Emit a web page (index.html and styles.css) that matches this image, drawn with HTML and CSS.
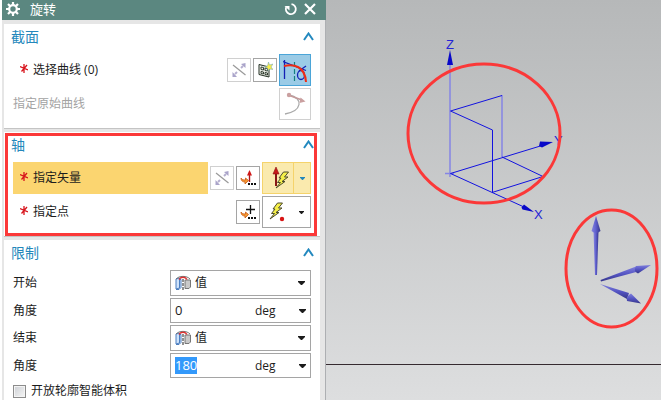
FILE: index.html
```html
<!DOCTYPE html>
<html lang="zh-CN">
<head>
<meta charset="utf-8">
<title>旋转</title>
<link rel="stylesheet" href="styles.css">
</head>
<body>
<svg class="defs" aria-hidden="true">
  <defs>
    <symbol id="star" viewBox="0 0 8 9"><path d="M4 0v9M0 2.500l8 3.500M7 1 1.500 7.500" fill="none" stroke="#d8141c" stroke-width="1.300"/></symbol>
    <symbol id="chevron" viewBox="0 0 11 9"><path d="M1 8 5.500 1.500 10 8" fill="none" stroke="#2389bf" stroke-width="2"/></symbol>
    <symbol id="caret" viewBox="0 0 7 4"><path d="M0 0h7v1L4 4H3L0 1z" fill="currentColor"/></symbol>
    <symbol id="reverse" viewBox="0 0 16 16">
      <path d="M2 3 14.500 13" stroke="#999" fill="none" stroke-width="1.200"/>
      <path d="M10 6l2-2M6 10l-2 2" stroke="#b6b0d0" stroke-width="2" fill="none"/>
      <path d="M10 2 14.500 1v5zM1.500 10v5H6z" fill="#aaa4ca"/>
    </symbol>
    <symbol id="swoosh" viewBox="0 0 16 16">
      <path d="M1 8c0 3 2 4 4 4v2l3.500-3.500L5.500 8v2C3 10 2 9.500 1 8z" fill="#f79a32" stroke="#c95b18" stroke-width=".8"/>
      <path d="M8 13h2v2H8zM11 13h2v2h-2zM14 13h2v2h-2z" fill="#111"/>
    </symbol>
    <symbol id="bolt" viewBox="0 0 14 18">
      <path d="M8.500 1h5L9.500 6H13L7 10.500h3L1 17l4.500-5.500h-3L6 7H4z" fill="#f5ef48" stroke="#4c4b2e" stroke-width="1"/>
    </symbol>
    <symbol id="solid" viewBox="0 0 16 16">
      <path d="M1 4 4.500 3v10L1 14zM4.500 4.500h1.500v8L4 14.500H1" fill="#cfe3fb" stroke="#4d7fc0"/>
      <path d="M10 5h5.500v7l-1.500 1.500h-4z" fill="#c9c9c9" stroke="#777"/>
      <path d="M1 4C4 .5 12 .5 15 4" fill="none" stroke="#777"/>
      <path d="M4 4.500C5.500 1.500 10.500 1.500 12 4.500" fill="none" stroke="#dc3030" stroke-width="1.500"/>
      <path d="M8 4v11" stroke="#222" stroke-dasharray="3 1"/>
    </symbol>
  </defs>
</svg>

<main class="app">
  <form class="dialog">
    <header class="titlebar">
      <svg class="gear" viewBox="0 0 14 14"><circle cx="7" cy="7" r="3.800" fill="none" stroke="#fff" stroke-width="2.200"/><path d="M7 0v3M7 11v3M0 7h3M11 7h3M2 2l2 2M10 10l2 2M12 2l-2 2M4 10l-2 2" stroke="#fff" stroke-width="2.200"/></svg>
      <h1>旋转</h1>
      <button type="button" class="bare" aria-label="重置"><svg width="14" height="14" viewBox="0 0 14 14"><path d="M7.500 2.200a5 5 0 1 1-5.300 3" fill="none" stroke="#fff" stroke-width="1.800"/><path d="M.5 4h5v4.500z" fill="#fff"/></svg></button>
      <button type="button" class="bare" aria-label="关闭"><svg width="12" height="12" viewBox="0 0 12 12"><path d="m1 1 10 10M11 1 1 11" stroke="#fff" stroke-width="2.200"/></svg></button>
    </header>

    <div class="sections">
      <section class="group">
        <div class="heading"><h2>截面</h2><button type="button" class="bare" aria-label="折叠截面"><svg width="11" height="9"><use href="#chevron"/></svg></button></div>
        <div class="row">
          <span class="prompt"><svg class="star"><use href="#star"/></svg>选择曲线 (0)</span>
          <button type="button" class="tool off" aria-label="反向"><svg width="16" height="16"><use href="#reverse"/></svg></button>
          <button type="button" class="tool" aria-label="绘制截面"><svg width="16" height="16" viewBox="0 0 16 16"><path d="M2 2.500 12 5v10L2 12.500z" fill="#eef1ea" stroke="#222f22"/><path d="M4 5l2.500.5V8L4 7.500zM8 6l2.500.5V9L8 8.500zM4 9.500l2.500.5v2L4 11.500zM8 10.500l2.500.5v2L8 12.500z" fill="none" stroke="#222f22" stroke-width=".9"/><path d="m11.500 0 1 3 3.500-1-2 3 2 2.500-3.500-.5-1.500 2-.5-3-3-1 3-1z" fill="#f8ee48" stroke="#699fbe" stroke-width=".5"/></svg></button>
          <button type="button" class="tool large active" aria-label="曲线"><svg width="24" height="26" viewBox="0 0 24 26"><path d="M1.500 3v19M0 4.500l23 9" fill="none" stroke="#1521b5" stroke-width="1.300"/><path d="M11.500 5v20" stroke="#168080" stroke-width="1.200" stroke-dasharray="5 2"/><ellipse cx="18" cy="18" rx="3.500" ry="4.500" fill="none" stroke="#1521b5" stroke-width="1.300"/><path d="m16 14 7-5" stroke="#1521b5" stroke-width="1.300"/><path d="M1 9c10-2 21 0 22 16" fill="none" stroke="#ee2c15" stroke-width="2"/></svg></button>
        </div>
        <div class="row">
          <span class="prompt muted">指定原始曲线</span>
          <button type="button" class="tool large off" aria-label="原始曲线"><svg width="26" height="26" viewBox="0 0 26 26"><path d="M7 4c15 3 13 16-4 19" fill="none" stroke="#a9a9a9" stroke-width="1.300"/><path d="m6 4 14 5" stroke="#c49a9a" stroke-width="1.500"/><circle cx="7" cy="4" r="2.200" fill="#caa0a0"/><path d="m18.500 6.500 5 4-6 1.500z" fill="#caa0a0"/></svg></button>
        </div>
      </section>

      <section class="group marked">
        <div class="heading"><h2>轴</h2><button type="button" class="bare" aria-label="折叠轴"><svg width="11" height="9"><use href="#chevron"/></svg></button></div>
        <div class="row">
          <span class="prompt current"><svg class="star"><use href="#star"/></svg>指定矢量</span>
          <button type="button" class="tool off" aria-label="反向矢量"><svg width="16" height="16"><use href="#reverse"/></svg></button>
          <button type="button" class="tool" aria-label="矢量对话框"><svg width="16" height="16" viewBox="0 0 16 16"><use href="#swoosh"/><path d="M9.500 5v7" stroke="#b01414" stroke-width="1.400"/><path d="m9.500 0 2.500 5.500H7z" fill="#d01818"/></svg></button>
          <span class="split current">
            <button type="button" class="main" aria-label="自动判断的矢量"><svg width="22" height="24" viewBox="0 0 22 24"><path d="M9 8v12" stroke="#881616" stroke-width="2"/><path d="m9 1 3 7H6z" fill="#c81a1a" stroke="#8a1212" stroke-width=".6"/><use href="#bolt" x="8" y="5" width="14" height="18"/></svg></button>
            <button type="button" class="drop" aria-label="矢量选项"><svg width="5" height="3"><use href="#caret"/></svg></button>
          </span>
        </div>
        <div class="row">
          <span class="prompt"><svg class="star"><use href="#star"/></svg>指定点</span>
          <button type="button" class="tool" aria-label="点对话框"><svg width="16" height="16" viewBox="0 0 16 16"><use href="#swoosh"/><path d="M6 5.500h9M10.500 1v9" stroke="#111" stroke-width="1.300"/></svg></button>
          <span class="split">
            <button type="button" class="main" aria-label="自动判断的点"><svg width="22" height="24" viewBox="0 0 22 24"><use href="#bolt" x="2" y="2" width="14" height="18"/><circle cx="15" cy="19" r="2.200" fill="#d81515"/></svg></button>
            <button type="button" class="drop" aria-label="点选项"><svg width="5" height="3"><use href="#caret"/></svg></button>
          </span>
        </div>
      </section>

      <section class="group last">
        <div class="heading"><h2>限制</h2><button type="button" class="bare" aria-label="折叠限制"><svg width="11" height="9"><use href="#chevron"/></svg></button></div>
        <div class="fields">
          <label for="start">开始</label>
          <div class="combo"><svg width="16" height="16"><use href="#solid"/></svg><select id="start"><option>值</option></select><svg class="caret"><use href="#caret"/></svg></div>
          <label for="start-angle">角度</label>
          <div class="combo number"><span class="entry"><input id="start-angle" type="text" value="0"></span><select aria-label="开始角度单位"><option>deg</option></select><svg class="caret"><use href="#caret"/></svg></div>
          <label for="end">结束</label>
          <div class="combo"><svg width="16" height="16"><use href="#solid"/></svg><select id="end"><option>值</option></select><svg class="caret"><use href="#caret"/></svg></div>
          <label for="end-angle">角度</label>
          <div class="combo number"><span class="entry"><input id="end-angle" class="selected" type="text" value="180"></span><select aria-label="结束角度单位"><option>deg</option></select><svg class="caret"><use href="#caret"/></svg></div>
        </div>
        <label class="check"><input type="checkbox">开放轮廓智能体积</label>
      </section>
    </div>
  </form>

  <div class="stage">
    <svg class="scene" role="img" aria-label="坐标系">
      <defs>
        <linearGradient id="cone" x1="0" x2="1" y1="0" y2="0"><stop offset="0" stop-color="#8585dd"/><stop offset=".45" stop-color="#6262d0"/><stop offset="1" stop-color="#353589"/></linearGradient>
        <linearGradient id="cone-side" x1="0" x2="0" y1="0" y2="1"><stop offset="0" stop-color="#8080dc"/><stop offset=".5" stop-color="#5555c4"/><stop offset="1" stop-color="#353589"/></linearGradient>
      </defs>
      <path d="M0 364.500h4000" stroke="#362a30"/>
      <g transform="translate(-326 0)">
        <g fill="none" stroke="#8585e5" stroke-width="1.500">
          <path d="M450 64v113M502 95v62M445 173.500h9"/>
        </g>
        <g fill="none" stroke="#1212e0">
          <path d="M502 95.500 450.500 111 492.500 130v63"/>
          <path d="M542 145.500 450.500 173.500 524 207M502 157l41 19.500-51 16"/>
        </g>
        <g fill="#0808c8">
          <path d="m450 50 3 15h-6zM553 142l-13-.5-1 4.500 3 1.500zM534 212l-10-7.500-2.500 3 1 2z"/>
        </g>
        <g class="axis">
          <text x="446" y="49">Z</text><text x="554" y="145">Y</text><text x="534" y="219">X</text>
        </g>
        <path d="M593.500 231h5l-1.500 44h-2z" fill="url(#cone)"/>
        <path d="m596 216 4.500 15q-4.500 4-9 0z" fill="url(#cone)"/>
        <path d="m601 281.500-.5-1.500L636 266.500l2 5z" fill="url(#cone-side)"/>
        <path d="m651 265-13 8.500q-5-2-2-7.500z" fill="url(#cone-side)"/>
        <path d="m600 284 29 9-2 6z" fill="url(#cone-side)"/>
        <path d="m641 303.500-14-2.500q-1-5 4-7.500z" fill="url(#cone-side)"/>
        <g fill="none" stroke="#fb3838" stroke-width="3">
          <ellipse cx="484" cy="133.500" rx="76" ry="69.500"/>
          <ellipse cx="611.500" cy="268.500" rx="45.500" ry="58.500"/>
        </g>
      </g>
    </svg>
  </div>
</main>
</body>
</html>
```
FILE: styles.css
```css
* { box-sizing: border-box; }

body {
  margin: 0;
  overflow: hidden;
  background: #fff;
  color: #1c1c1c;
  font: 12px/16px "Open Sans", "Noto Sans CJK SC", sans-serif;
}

h1, h2 { margin: 0; font-weight: 400; }
button, input, select { margin: 0; padding: 0; font: inherit; color: inherit; }
svg { display: block; flex: none; }
.defs { position: absolute; width: 0; height: 0; }

.app { display: flex; height: 100vh; }

.dialog {
  display: flex;
  flex-direction: column;
  flex: none;
  width: 326px;
  padding-left: 2px;
}

.titlebar {
  display: flex;
  align-items: center;
  flex: none;
  gap: 6px;
  height: 20px;
  padding: 0 10px 2px 4px;
  background: #5b8780;
  color: #fff;
}
.titlebar h1 { flex: 1; padding-left: 4px; font-size: 13px; line-height: 18px; }
.gear { width: 14px; height: 14px; }

.bare { border: 0; background: none; }

.sections {
  display: flex;
  flex-direction: column;
  flex: 1;
  gap: 4px;
  min-height: 0;
  padding: 4px 5px 0 2px;
  background: #e6e6e6;
  border-right: 1px solid #adafb2;
}

.group {
  display: flex;
  flex-direction: column;
  flex: none;
  gap: 2px;
  padding-bottom: 8px;
  background: #fff;
  box-shadow: 0 1px #c4c4c4;
}
.group.last { flex: 1 0 auto; }

.marked { position: relative; }
.marked::after {
  content: "";
  position: absolute;
  inset: 1px 3px 0 1px;
  border: 3px solid #fb3838;
  pointer-events: none;
}

.heading {
  display: flex;
  align-items: center;
  justify-content: space-between;
  height: 28px;
  padding: 0 6px 3px 7px;
  color: #2487bb;
}
.heading h2 { font-size: 14px; line-height: 20px; }

.row {
  display: flex;
  align-items: center;
  gap: 2px;
  height: 32px;
  padding: 0 9px;
}

.prompt {
  display: flex;
  align-items: center;
  flex: 1;
  gap: 5px;
  height: 32px;
  padding-left: 7px;
}
.prompt.muted { padding-left: 0; color: #a3a3a3; }
.prompt.current { background: #fbd570; }
.star { width: 8px; height: 9px; margin-bottom: 4px; }

.tool {
  display: grid;
  place-items: center;
  width: 24px;
  height: 24px;
  border: 1px solid #a5a5a5;
  background: #fff;
}
.tool.off { border-color: #d0d0d0; }
.tool.large { width: 32px; height: 32px; }
.tool.active { border-color: #4ba5d8; background: #9bcbe6; }

.split {
  display: flex;
  width: 49px;
  height: 32px;
  border: 1px solid #a5a5a5;
}
.split button {
  display: grid;
  place-items: center;
  border: 0;
  background: #fff;
}
.split .main { width: 30px; }
.split .drop { flex: 1; }
.split.current { border-color: #f5d36b; }
.split.current button { background: #faeaae; }
.split.current .drop { border-left: 1px solid #f5d36b; color: #2487bb; }

.fields {
  display: grid;
  grid-template-columns: 1fr 141px;
  align-items: center;
  row-gap: 2px;
  padding: 0 9px;
}

.combo {
  display: flex;
  align-items: center;
  gap: 4px;
  height: 26px;
  padding: 0 5px 0 4px;
  border: 1px solid #a5a5a5;
  background: #fff;
}
.combo select {
  flex: 1;
  min-width: 0;
  border: 0;
  outline: 0;
  appearance: none;
  background: none;
}
.combo .caret { width: 7px; height: 4px; }
.combo.number { height: 25px; padding-right: 4px; }
.combo .entry { width: 76px; }
.combo input {
  display: block;
  width: 100%;
  height: 17px;
  border: 0;
  outline: 0;
  background: none;
  font-size: 13px;
  line-height: 17px;
}
.combo .selected { width: 22px; background: #3399fb; color: #fff; }

.check {
  display: flex;
  align-items: center;
  gap: 5px;
  padding: 3px 9px 0;
}
.check input {
  width: 13px;
  height: 13px;
  border: 1px solid #8c8c8c;
  outline: 1px solid #f4f4f4;
  outline-offset: -2px;
  appearance: none;
  background: linear-gradient(135deg, #cdd0d5, #f6f6f6);
}

.stage { flex: 1; min-width: 0; background: linear-gradient(#b6b8b9, #dddedf); }
.scene { width: 100%; height: 100%; }
.axis { fill: #2424d6; font: 13px "Liberation Sans", sans-serif; }
```
